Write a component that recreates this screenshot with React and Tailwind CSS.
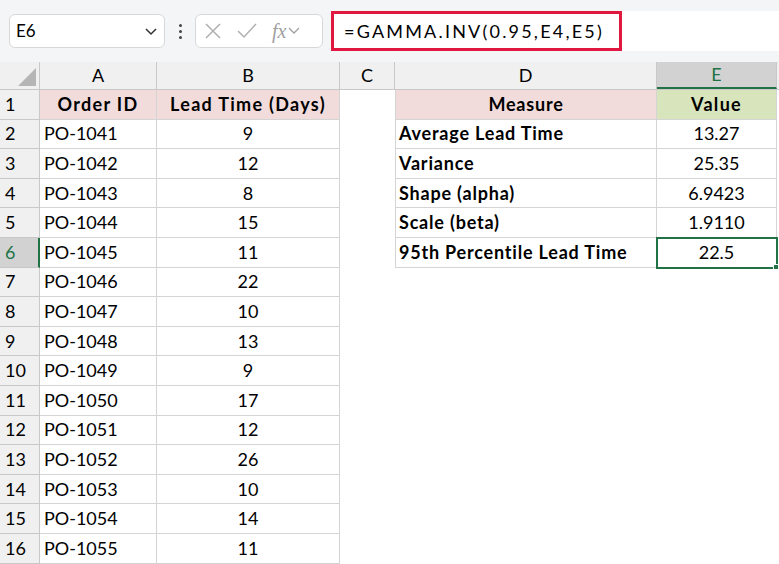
import React from "react";

const rowsAB = [
  ["PO-1041", 9], ["PO-1042", 12], ["PO-1043", 8], ["PO-1044", 15], ["PO-1045", 11],
  ["PO-1046", 22], ["PO-1047", 10], ["PO-1048", 13], ["PO-1049", 9], ["PO-1050", 17],
  ["PO-1051", 12], ["PO-1052", 26], ["PO-1053", 10], ["PO-1054", 14], ["PO-1055", 11],
];
const rowsDE = [
  ["Average Lead Time", "13.27"], ["Variance", "25.35"], ["Shape (alpha)", "6.9423"],
  ["Scale (beta)", "1.9110"], ["95th Percentile Lead Time", "22.5"],
];

export default function App() {
  const f = { fontFamily: "Lato, 'Noto Sans', sans-serif" };
  return (
    <div className="w-[779px] h-[564px] overflow-hidden bg-white text-[18px] text-black" style={f}>
      <div className="h-[62px] bg-[#f3f5f7] flex items-center pl-[9px] gap-0">
        <div className="w-[156px] h-[34px] bg-white border border-[#d8d8d8] rounded-md flex items-center justify-between px-[6px]">
          <span className="text-[17px]">E6</span>
          <svg width="14" height="10" viewBox="0 0 14 10"><path d="M2 3l5 5 5-5" fill="none" stroke="#333" strokeWidth="1.5" /></svg>
        </div>
        <div className="w-[30px] flex flex-col items-center gap-[3px]">
          <span className="w-[3px] h-[3px] bg-[#444] rounded-full" />
          <span className="w-[3px] h-[3px] bg-[#444] rounded-full" />
          <span className="w-[3px] h-[3px] bg-[#444] rounded-full" />
        </div>
        <div className="w-[128px] h-[34px] bg-white border border-[#d8d8d8] rounded-md flex items-center px-[8px] gap-[14px]">
          <svg width="18" height="18" viewBox="0 0 18 18"><path d="M2 2l14 14M16 2L2 16" stroke="#b0b0b0" strokeWidth="1.5" /></svg>
          <svg width="22" height="18" viewBox="0 0 22 18"><path d="M2 9l6 6L20 2" fill="none" stroke="#b0b0b0" strokeWidth="1.5" /></svg>
          <span className="flex items-center gap-[2px] text-[#a0a0a0] italic text-[20px]" style={{ fontFamily: "'Liberation Serif', serif" }}>fx
            <svg width="12" height="8" viewBox="0 0 12 8"><path d="M1 1l5 5 5-5" fill="none" stroke="#a0a0a0" strokeWidth="1.3" /></svg>
          </span>
        </div>
        <div className="ml-[8px] w-[291px] h-[40px] border-[3px] border-[#e0173f] bg-white flex items-center px-[10px] text-[18px] tracking-[2.2px]">
          =GAMMA.INV(0.95,E4,E5)
        </div>
        <div className="flex-1 h-[40px] bg-white" />
      </div>
      <div className="flex h-[28px] bg-[#f0f0f0] border-b border-[#c8c8c8] text-[18px]">
        <div className="w-[40px] border-r border-[#c8c8c8] relative">
          <svg className="absolute right-[3px] bottom-[3px]" width="18" height="18"><path d="M18 0L18 18L0 18Z" fill="#b5b5b5" /></svg>
        </div>
        {[["A", 117], ["B", 183], ["C", 55], ["D", 262]].map(([c, w]) => (
          <div key={c} className="border-r border-[#c8c8c8] flex items-center justify-center" style={{ width: w }}>{c}</div>
        ))}
        <div className="w-[120px] bg-[#d2d2d2] border-r border-[#c8c8c8] border-b-2 border-b-[#217346] text-[#217346] flex items-center justify-center">E</div>
        <div className="flex-1" />
      </div>
      {Array.from({ length: 16 }).map((_, i) => {
        const r = i + 1;
        const sel = r === 6;
        const ab = r === 1 ? ["Order ID", "Lead Time (Days)"] : rowsAB[i - 1];
        const de = r === 1 ? ["Measure", "Value"] : rowsDE[i - 1];
        const head = r === 1;
        return (
          <div key={r} className="flex h-[29.6px]">
            <div className={`w-[40px] border-r border-b border-[#c8c8c8] flex items-center pl-[5px] ${sel ? "bg-[#d2d2d2] text-[#217346] border-r-2 border-r-[#217346]" : "bg-[#f0f0f0]"}`}>{r}</div>
            <div className={`w-[117px] border-r border-b border-[#d4d4d4] flex items-center px-[4px] ${head ? "bg-[#f2dcdb] font-bold justify-center tracking-[1.3px]" : ""}`}>{ab[0]}</div>
            <div className={`w-[183px] border-r border-b border-[#d4d4d4] flex items-center justify-center ${head ? "bg-[#f2dcdb] font-bold tracking-[1.3px]" : ""}`}>{ab[1]}</div>
            <div className="w-[55px]" />
            {de ? (
              <>
                <div className={`w-[262px] border-l border-r border-b border-[#d4d4d4] flex items-center px-[3px] font-bold tracking-[0.8px] ${head ? "bg-[#f2dcdb] justify-center" : ""}`}>{de[0]}</div>
                <div className={`w-[120px] border-r border-b flex items-center justify-center relative ${head ? "bg-[#d8e4bc] font-bold tracking-[1.3px] border-[#d4d4d4]" : "border-[#d4d4d4]"} ${sel ? "outline-2 outline-[#217346] -outline-offset-1" : ""}`}>
                  {de[1]}
                  {sel && <span className="absolute -right-[3px] -bottom-[3px] w-[6px] h-[6px] bg-[#217346] border border-white" />}
                </div>
              </>
            ) : null}
          </div>
        );
      })}
    </div>
  );
}
